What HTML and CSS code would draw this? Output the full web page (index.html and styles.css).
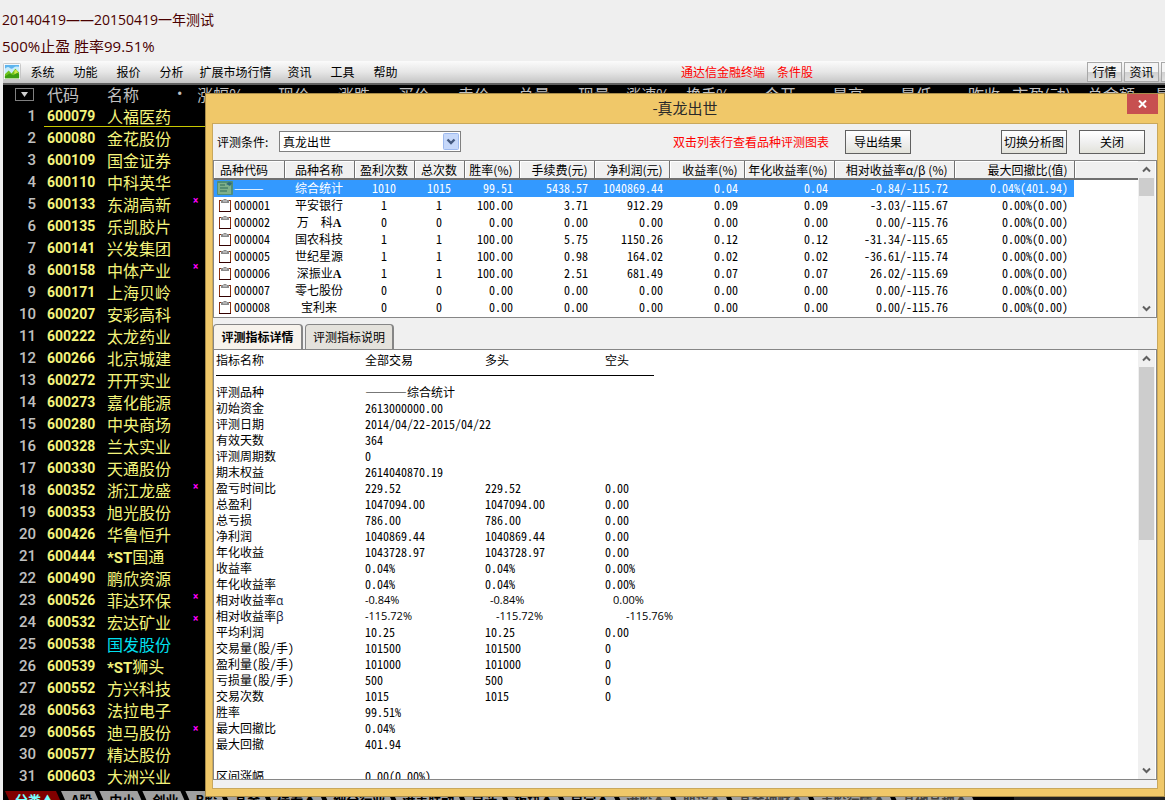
FILE: index.html
```html
<!DOCTYPE html>
<html lang="zh-CN">
<head>
<meta charset="utf-8">
<title>真龙出世</title>
<link rel="stylesheet" href="styles.css">
</head>
<body>
<header class="intro">
<p>20140419——20150419一年测试</p>
<p class="rate">500%止盈 胜率99.51%</p>
</header>
<main class="app">
<nav class="menubar">
<svg class="logo" viewBox="0 0 19 19" width="18" height="18" aria-hidden="true">
<rect x="0.5" y="0.5" width="18" height="17" rx="1" fill="#fff" stroke="#c4c4c4"/>
<rect x="2" y="2" width="15" height="9" fill="#5db4ee"/>
<path d="M2 6q3-3 5-1t4 0 6-1v7H2z" fill="#c9ecfb"/>
<path d="M2 12l4-4 3 3 4-5 4 4v6H2z" fill="#6fc41c"/>
<path d="M2 14l5-3 4 2 4-3 2 2v4H2z" fill="#3d9d10"/>
<path d="M12 8l2-1 2 3-4 2z" fill="#cfe84a"/>
</svg>
<button class="menu">系统</button><button class="menu">功能</button><button class="menu">报价</button><button class="menu">分析</button><button class="menu wide">扩展市场行情</button><button class="menu">资讯</button><button class="menu">工具</button><button class="menu">帮助</button>
<div class="notice"><span>通达信金融终端</span><span>条件股</span></div>
<div class="quick"><button class="chip">行情</button><button class="chip">资讯</button><span class="chip stub"></span></div>
</nav>
<section class="market">
<table class="quotes">
<colgroup><col class="w41"><col class="w60"><col class="w71"><col class="w15"><col class="w56"><col class="w66"><col class="w60"><col class="w60"><col class="w60"><col class="w60"><col class="w60"><col class="w60"><col class="w60"><col class="w66"><col class="w68"><col class="w68"><col class="w68"><col class="w71"><col class="w64"><col></colgroup>
<thead><tr><th class="pick"><svg viewBox="0 0 19 13" width="19" height="13" aria-hidden="true"><rect x="0.5" y="0.5" width="18" height="12" fill="#000" stroke="#808080"/><path d="M6 4h7l-3.500 5z" fill="#d0d0d0"/></svg></th><th class="l">代码</th><th class="l">名称</th><th class="l dot">•</th><th>涨幅%</th><th>现价</th><th>涨跌</th><th>买价</th><th>卖价</th><th>总量</th><th>现量</th><th class="tight">涨速%</th><th class="tight">换手%</th><th>今开</th><th>最高</th><th>最低</th><th>昨收</th><th>市盈(动)</th><th>总金额</th><th class="last">最高</th></tr></thead>
<tbody>
<tr class="current"><td>1</td><td>600079</td><td>人福医药</td><td></td><td></td></tr>
<tr><td>2</td><td>600080</td><td>金花股份</td></tr>
<tr><td>3</td><td>600109</td><td>国金证券</td></tr>
<tr><td>4</td><td>600110</td><td>中科英华</td></tr>
<tr><td>5</td><td>600133</td><td>东湖高新</td><td></td><td>×</td></tr>
<tr><td>6</td><td>600135</td><td>乐凯胶片</td></tr>
<tr><td>7</td><td>600141</td><td>兴发集团</td></tr>
<tr><td>8</td><td>600158</td><td>中体产业</td><td></td><td>×</td></tr>
<tr><td>9</td><td>600171</td><td>上海贝岭</td></tr>
<tr><td>10</td><td>600207</td><td>安彩高科</td></tr>
<tr><td>11</td><td>600222</td><td>太龙药业</td></tr>
<tr><td>12</td><td>600266</td><td>北京城建</td></tr>
<tr><td>13</td><td>600272</td><td>开开实业</td></tr>
<tr><td>14</td><td>600273</td><td>嘉化能源</td></tr>
<tr><td>15</td><td>600280</td><td>中央商场</td></tr>
<tr><td>16</td><td>600328</td><td>兰太实业</td></tr>
<tr><td>17</td><td>600330</td><td>天通股份</td></tr>
<tr><td>18</td><td>600352</td><td>浙江龙盛</td><td></td><td>×</td></tr>
<tr><td>19</td><td>600353</td><td>旭光股份</td></tr>
<tr><td>20</td><td>600426</td><td>华鲁恒升</td></tr>
<tr><td>21</td><td>600444</td><td><b>*ST</b>国通</td></tr>
<tr><td>22</td><td>600490</td><td>鹏欣资源</td></tr>
<tr><td>23</td><td>600526</td><td>菲达环保</td><td></td><td>×</td></tr>
<tr><td>24</td><td>600532</td><td>宏达矿业</td><td></td><td>×</td></tr>
<tr><td>25</td><td>600538</td><td class="cyan">国发股份</td></tr>
<tr><td>26</td><td>600539</td><td><b>*ST</b>狮头</td></tr>
<tr><td>27</td><td>600552</td><td>方兴科技</td></tr>
<tr><td>28</td><td>600563</td><td>法拉电子</td></tr>
<tr><td>29</td><td>600565</td><td>迪马股份</td><td></td><td>×</td></tr>
<tr><td>30</td><td>600577</td><td>精达股份</td></tr>
<tr><td>31</td><td>600603</td><td>大洲兴业</td></tr>
</tbody>
</table>
<div class="sheets">
<button class="sheet on">分类▲</button><button class="sheet">A股</button><button class="sheet">中小</button><button class="sheet">创业</button><button class="sheet">B股</button><button class="sheet">基金</button><button class="sheet">债券▲</button><button class="sheet">细分行业</button><button class="sheet">港美联动</button><button class="sheet">自选</button><button class="sheet">板块▲</button><button class="sheet">自定▲</button><button class="sheet">港股▲</button><button class="sheet">期货▲</button><button class="sheet">基金理财▲</button><button class="sheet">美股行情▲</button><button class="sheet">其他品种▲</button>
<span class="track"></span>
</div>
</section>

<section class="dialog" role="dialog" aria-labelledby="dlg-title">
<div class="titlebar">
<h1 id="dlg-title">-真龙出世</h1>
<button class="close" aria-label="关闭窗口"><svg viewBox="0 0 9 8" width="9" height="8"><path d="M1 0.500l7 7M8 0.500l-7 7" stroke="#fff" stroke-width="2" fill="none"/></svg></button>
</div>
<div class="client">
<div class="toolbar">
<label for="cond">评测条件:</label>
<span class="combo"><select id="cond"><option>真龙出世</option></select><svg viewBox="0 0 16 17" width="16" height="17" aria-hidden="true"><rect x="0.5" y="0.5" width="15" height="16" rx="1" fill="#c6d8fa" stroke="#9db9ee"/><path d="M4.500 6.500L8 10l3.500-3.500" stroke="#44597f" stroke-width="2.400" fill="none"/></svg></span>
<span class="hint">双击列表行查看品种评测图表</span>
<button class="btn export">导出结果</button>
<button class="btn switch">切换分析图</button>
<button class="btn">关闭</button>
</div>

<div class="panel results">
<div class="scroller">
<table class="grid">
<colgroup><col class="w70"><col class="w70"><col class="w60"><col class="w50"><col class="w55"><col class="w75"><col class="w75"><col class="w75"><col class="w90"><col class="w120"><col class="w120"><col></colgroup>
<thead><tr><th>品种代码</th><th>品种名称</th><th>盈利次数</th><th>总次数</th><th>胜率(%)</th><th>手续费(元)</th><th>净利润(元)</th><th>收益率(%)</th><th>年化收益率(%)</th><th>相对收益率α/β (%)</th><th>最大回撤比(值)</th><th></th></tr></thead>
<tbody>
<tr class="sel"><td><span class="code"><svg viewBox="0 0 16 14" width="16" height="14" aria-hidden="true"><rect width="16" height="14" rx="1" fill="#4f8f78"/><rect x="1" y="2" width="13" height="11" fill="#7fb08a"/><path d="M3 4h5M3 7h8M3 10h7" stroke="#2f6a5a"/><path d="M9 3l3-2 3 1-2 3z" fill="#2f6a78"/></svg>———</span></td><td>综合统计</td><td>1010</td><td>1015</td><td>99.51</td><td>5438.57</td><td>1040869.44</td><td>0.04</td><td>0.04</td><td>-0.84/-115.72</td><td>0.04%(401.94)</td></tr>
<tr><td><span class="code"><svg class="clip" viewBox="0 0 12 13" width="12" height="13"><use href="#clip"/></svg>000001</span></td><td>平安银行</td><td>1</td><td>1</td><td>100.00</td><td>3.71</td><td>912.29</td><td>0.09</td><td>0.09</td><td>-3.03/-115.67</td><td>0.00%(0.00)</td></tr>
<tr><td><span class="code"><svg class="clip" viewBox="0 0 12 13" width="12" height="13"><use href="#clip"/></svg>000002</span></td><td>万　科<b>A</b></td><td>0</td><td>0</td><td>0.00</td><td>0.00</td><td>0.00</td><td>0.00</td><td>0.00</td><td>0.00/-115.76</td><td>0.00%(0.00)</td></tr>
<tr><td><span class="code"><svg class="clip" viewBox="0 0 12 13" width="12" height="13"><use href="#clip"/></svg>000004</span></td><td>国农科技</td><td>1</td><td>1</td><td>100.00</td><td>5.75</td><td>1150.26</td><td>0.12</td><td>0.12</td><td>-31.34/-115.65</td><td>0.00%(0.00)</td></tr>
<tr><td><span class="code"><svg class="clip" viewBox="0 0 12 13" width="12" height="13"><use href="#clip"/></svg>000005</span></td><td>世纪星源</td><td>1</td><td>1</td><td>100.00</td><td>0.98</td><td>164.02</td><td>0.02</td><td>0.02</td><td>-36.61/-115.74</td><td>0.00%(0.00)</td></tr>
<tr><td><span class="code"><svg class="clip" viewBox="0 0 12 13" width="12" height="13"><use href="#clip"/></svg>000006</span></td><td>深振业<b>A</b></td><td>1</td><td>1</td><td>100.00</td><td>2.51</td><td>681.49</td><td>0.07</td><td>0.07</td><td>26.02/-115.69</td><td>0.00%(0.00)</td></tr>
<tr><td><span class="code"><svg class="clip" viewBox="0 0 12 13" width="12" height="13"><use href="#clip"/></svg>000007</span></td><td>零七股份</td><td>0</td><td>0</td><td>0.00</td><td>0.00</td><td>0.00</td><td>0.00</td><td>0.00</td><td>0.00/-115.76</td><td>0.00%(0.00)</td></tr>
<tr><td><span class="code"><svg class="clip" viewBox="0 0 12 13" width="12" height="13"><use href="#clip"/></svg>000008</span></td><td>宝利来</td><td>0</td><td>0</td><td>0.00</td><td>0.00</td><td>0.00</td><td>0.00</td><td>0.00</td><td>0.00/-115.76</td><td>0.00%(0.00)</td></tr>
</tbody>
</table>
</div>
<div class="bar"><svg class="arrow" viewBox="0 0 17 17" width="17" height="17"><use href="#up"/></svg><span class="thumb short"></span><svg class="arrow end" viewBox="0 0 17 17" width="17" height="17"><use href="#down"/></svg></div>
</div>

<div class="tabs" role="tablist">
<button class="tab active" role="tab" aria-selected="true">评测指标详情</button>
<button class="tab" role="tab" aria-selected="false">评测指标说明</button>
</div>

<div class="panel details">
<div class="scroller">
<table class="report">
<colgroup><col class="w149"><col class="w120"><col class="w120"><col></colgroup>
<thead><tr><th>指标名称</th><th>全部交易</th><th>多头</th><th>空头</th></tr><tr class="rule"><th colspan="4"><hr></th></tr></thead>
<tbody>
<tr><th>评测品种</th><td class="cjk" colspan="3"><span class="dash">———</span>综合统计</td></tr>
<tr><th>初始资金</th><td>2613000000.00</td></tr>
<tr><th>评测日期</th><td colspan="3">2014/04/22-2015/04/22</td></tr>
<tr><th>有效天数</th><td>364</td></tr>
<tr><th>评测周期数</th><td>0</td></tr>
<tr><th>期末权益</th><td>2614040870.19</td></tr>
<tr><th>盈亏时间比</th><td>229.52</td><td>229.52</td><td>0.00</td></tr>
<tr><th>总盈利</th><td>1047094.00</td><td>1047094.00</td><td>0.00</td></tr>
<tr><th>总亏损</th><td>786.00</td><td>786.00</td><td>0.00</td></tr>
<tr><th>净利润</th><td>1040869.44</td><td>1040869.44</td><td>0.00</td></tr>
<tr><th>年化收益</th><td>1043728.97</td><td>1043728.97</td><td>0.00</td></tr>
<tr><th>收益率</th><td>0.04%</td><td>0.04%</td><td>0.00%</td></tr>
<tr><th>年化收益率</th><td>0.04%</td><td>0.04%</td><td>0.00%</td></tr>
<tr class="prop alpha"><th>相对收益率<i>α</i></th><td>-0.84%</td><td>-0.84%</td><td>0.00%</td></tr>
<tr class="prop beta"><th>相对收益率<i>β</i></th><td>-115.72%</td><td>-115.72%</td><td>-115.76%</td></tr>
<tr><th>平均利润</th><td>10.25</td><td>10.25</td><td>0.00</td></tr>
<tr><th class="unit">交易量(股/手)</th><td>101500</td><td>101500</td><td>0</td></tr>
<tr><th class="unit">盈利量(股/手)</th><td>101000</td><td>101000</td><td>0</td></tr>
<tr><th class="unit">亏损量(股/手)</th><td>500</td><td>500</td><td>0</td></tr>
<tr><th>交易次数</th><td>1015</td><td>1015</td><td>0</td></tr>
<tr><th>胜率</th><td>99.51%</td></tr>
<tr><th>最大回撤比</th><td>0.04%</td></tr>
<tr><th>最大回撤</th><td>401.94</td></tr>
<tr><th></th></tr>
<tr><th>区间涨幅</th><td>0.00(0.00%)</td></tr>
</tbody>
</table>
</div>
<div class="bar"><svg class="arrow" viewBox="0 0 17 17" width="17" height="17"><use href="#up"/></svg><span class="thumb long"></span><svg class="arrow end" viewBox="0 0 17 17" width="17" height="17"><use href="#down"/></svg></div>
</div>
</div>
</section>
</main>
<svg class="defs" width="0" height="0" aria-hidden="true"><defs>
<g id="clip"><rect x="0.5" y="1.5" width="11" height="11" fill="#fff" stroke="#8c2f10"/><path d="M0 12.500h12" stroke="#300"/><path d="M2 1h2l1-1h2l1 1h2v3H2z" fill="#8a8a8a"/><path d="M4 2h4" stroke="#ddd"/></g>
<path id="up" d="M5 10.500L8.500 7l3.500 3.500" stroke="#606060" stroke-width="2" fill="none"/>
<path id="down" d="M5 6.500L8.500 10L12 6.500" stroke="#606060" stroke-width="2" fill="none"/>
</defs></svg>
</body>
</html>
```
FILE: styles.css
```css
* { box-sizing: border-box; }
body {
  margin: 0;
  height: 100vh;
  overflow: hidden;
  display: flex;
  flex-direction: column;
  background: #efefef;
  color: #000;
  font: 12px/16px "Noto Sans CJK SC", sans-serif;
}
button { font: inherit; color: inherit; padding: 0; margin: 0; border: 0; background: none; white-space: nowrap; }
table { border-collapse: collapse; border-spacing: 0; table-layout: fixed; width: 100%; }
th, td { padding: 0; font-weight: 400; white-space: nowrap; text-align: left; }
svg { display: block; flex: none; }
.defs { position: absolute; }

.w15 { width: 15px; } .w41 { width: 41px; } .w50 { width: 50px; } .w55 { width: 55px; }
.w56 { width: 56px; } .w60 { width: 60px; } .w64 { width: 64px; } .w66 { width: 66px; }
.w68 { width: 68px; } .w70 { width: 70px; } .w71 { width: 71px; } .w75 { width: 75px; }
.w90 { width: 90px; } .w120 { width: 120px; } .w149 { width: 149px; }

.intro { padding: 6px 2px 1px; color: #4a0000; font: 14px/27px "Open Sans", "Noto Sans CJK SC", sans-serif; }
.intro p { margin: 0; }
.intro .rate { font-size: 15px; }

.app { position: relative; flex: 1; min-height: 0; margin-left: 3px; display: flex; flex-direction: column; }
.menubar {
  display: flex;
  align-items: center;
  height: 24px;
  flex: none;
  background: linear-gradient(#fbfbfb, #e6e6e6 50%, #c4c4c4);
  border-bottom: 2px solid #606060;
}
.menu { width: 43px; height: 22px; text-align: center; }
.menu.wide { width: 85px; }
.notice { display: flex; gap: 12px; margin-left: 274px; color: #f00; }
.quick { display: flex; gap: 2px; margin-left: auto; }
.chip { width: 35px; height: 20px; border: 1px solid #a8a8a8; background: linear-gradient(#f4f4f4 50%, #d0d0d0 50%, #e0e0e0); }
.chip.stub { width: 4px; border-right: 0; }

.market { flex: 1; min-height: 0; overflow: hidden; background: #000; display: flex; flex-direction: column; }
.quotes { color: #f4f47c; font-size: 16px; flex: none; }
.quotes thead th { height: 20px; line-height: 18px; color: #c0c0c0; text-align: right; padding: 0 2px 2px 0; }
.quotes thead .l { text-align: left; padding-left: 3px; padding-right: 0; }
.quotes thead .dot { padding-left: 2px; font-family: Roboto, sans-serif; }
.quotes thead .tight { font-size: 15px; }
.quotes thead .last { text-align: left; padding-left: 18px; overflow: hidden; }
.quotes .pick svg { margin-left: 12px; }
.quotes td { height: 22px; line-height: 20px; padding: 0 0 0 3px; }
.quotes td:nth-child(1) { text-align: right; padding-right: 8px; color: #c0c0c0; font: 500 15px/20px Roboto, sans-serif; }
.quotes td:nth-child(2) { font: 700 14px/20px Roboto, sans-serif; }
.quotes td:nth-child(5) { color: #f0f; font: 700 10px/16px Roboto, sans-serif; vertical-align: top; }
.quotes b { font: 700 15px/1 "Liberation Sans Narrow", Roboto, sans-serif; }
.quotes .cyan { color: #00e0f0; }
.current td:nth-child(n+2) { box-shadow: inset 0 -1px #c8c800; }
.sheets { display: flex; margin-top: 4px; padding-left: 2px; height: 18px; flex: none; background: #000; }
.sheet {
  flex: none;
  margin-right: -3px;
  padding: 0 10px;
  height: 18px;
  font-size: 13px;
  line-height: 16px;
  font-weight: 700;
  background: #a0a0a0;
  clip-path: polygon(0 0, calc(100% - 8px) 0, 100% 100%, 8px 100%);
}
.sheet.on { background: #800000; color: #7ff; }
.sheet:nth-child(n+13) { color: #444; }
.track { flex: 1; background: #222; margin-left: 40px; }

.dialog {
  position: absolute;
  top: 32px;
  right: 0;
  bottom: 3px;
  left: 202px;
  display: flex;
  flex-direction: column;
  padding: 0 6px 7px;
  background: #f0c869;
  border: 1px solid #a88c4a;
}
.titlebar { display: grid; grid-template-columns: 31px 1fr 31px; height: 29px; flex: none; }
.titlebar h1 { grid-column: 2; margin: 0; text-align: center; color: #2a2a2a; font-size: 15px; line-height: 28px; font-weight: 400; }
.close { height: 20px; background: #c75050; display: grid; place-items: center; }
.client { flex: 1; min-height: 0; display: flex; flex-direction: column; padding-bottom: 8px; background: #f0f0f0; border: 1px solid #c9a85c; }
.toolbar { display: flex; align-items: center; height: 36px; flex: none; padding: 0 12px 1px 4px; }
.toolbar label { width: 62px; }
.combo { position: relative; width: 182px; }
.combo select { appearance: none; display: block; width: 100%; height: 21px; padding: 0 3px; border: 1px solid #808080; border-radius: 0; background: #fff; color: #000; font: inherit; }
.combo svg { position: absolute; top: 2px; right: 2px; pointer-events: none; }
.hint { margin-left: auto; margin-right: 16px; color: #f00; }
.btn { width: 66px; height: 24px; border: 1px solid #606060; background: linear-gradient(#fff, #f0f0f0 50%, #e2e2da); }
.export { margin-right: 90px; }
.switch { margin-right: 12px; }

.panel { display: flex; background: #fff; border: 1px solid #868686; }
.scroller { flex: 1; min-width: 0; overflow: hidden; }
.bar { width: 17px; margin-right: 1px; flex: none; display: flex; flex-direction: column; align-items: center; background: #f0f0f0; }
.thumb { width: 15px; background: #cdcdcd; }
.short { height: 18px; }
.long { height: 173px; }
.arrow.end { margin-top: auto; }

.results { height: 158px; flex: none; }
.grid th {
  height: 18px;
  line-height: 15px;
  background: #f0f0f0;
  border-right: 1px solid #707070;
  border-bottom: 2px solid #707070;
  box-shadow: inset 1px 1px #fff;
  text-align: right;
  padding-right: 6px;
}
.grid th:last-child { border-right: 0; }
.grid th:nth-child(-n+4) { text-align: center; padding: 0; }
.grid th:first-child { text-align: left; padding-left: 6px; }
.grid td { height: 17px; line-height: 16px; padding: 0 6px 1px 0; text-align: right; font-family: "Noto Sans Mono CJK SC", "Noto Sans CJK SC", monospace; }
.grid td:nth-child(-n+4) { text-align: center; padding: 0 0 1px; }
.grid td b { font: 700 12px/12px "Liberation Serif", serif; }
.sel { background: #39f; color: #fff; }
.code { display: flex; align-items: center; gap: 1px; padding-left: 3px; }
.clip { margin: 0 2px; }

.tabs { display: flex; align-items: flex-end; gap: 2px; height: 31px; flex: none; }
.tab { width: 89px; height: 25px; border: 1px solid #868686; border-right-width: 2px; border-bottom: 0; border-radius: 4px 4px 0 0; background: #e4e2dc; }
.tab.active { background: #f7f3ec; font-weight: 700; width: 90px; }

.details { flex: 1; min-height: 0; }
.details .scroller { padding: 2px 0 0 2px; }
.report th, .report td { height: 16px; line-height: 16px; }
.report td { font-family: "Noto Sans Mono CJK SC", "Noto Sans CJK SC", monospace; }
.report .rule th { padding-bottom: 8px; height: 16px; line-height: 1px; }
.report hr { width: 438px; height: 1px; margin: 7px 0 0; border: 0; background: #000; }
.report i { font: 12px/1 "Open Sans", sans-serif; color: #124; }
.report .unit { font-family: "Noto Sans Mono CJK SC", "Noto Sans CJK SC", monospace; }
.report .cjk { font-family: "Noto Sans CJK SC", sans-serif; }
.report .dash { font-size: 14px; line-height: 1; }
.report .prop td { font: 11px/14px "Open Sans", sans-serif; }
.alpha td:nth-child(3) { padding-left: 5px; }
.alpha td:nth-child(4) { padding-left: 8px; }
.beta td:nth-child(3) { padding-left: 11px; }
.beta td:nth-child(4) { padding-left: 21px; }
```
